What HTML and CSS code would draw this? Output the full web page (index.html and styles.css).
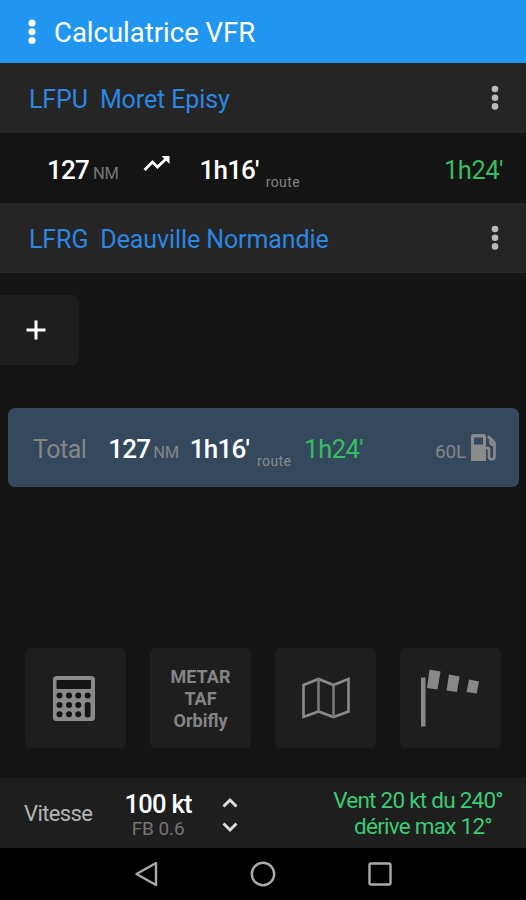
FILE: index.html
```html
<!DOCTYPE html>
<html lang="fr">

<head>
    <meta charset="UTF-8">
    <meta name="viewport" content="width=device-width, initial-scale=1.0">
    <title>Calculatrice VFR</title>
    <link rel="stylesheet" href="styles.css">
</head>

<body>
    <header class="topbar">
        <svg class="dots" width="8" height="26" viewBox="0 0 8 26">
            <circle cx="4" cy="4" r="3.5" />
            <circle cx="4" cy="12.7" r="3.5" />
            <circle cx="4" cy="21.4" r="3.5" />
        </svg>
        <h1>Calculatrice VFR</h1>
    </header>

    <main>
        <div class="airport">
            <span class="code">LFPU</span>
            <span class="name">Moret Episy</span>
            <svg class="dots" width="8" height="26" viewBox="0 0 8 26">
                <circle cx="4" cy="4" r="3.3" />
                <circle cx="4" cy="12.7" r="3.3" />
                <circle cx="4" cy="21.4" r="3.3" />
            </svg>
        </div>

        <div class="leg">
            <span class="value">127</span>
            <span class="unit">NM</span>
            <svg class="trend" width="28" height="18" viewBox="0 0 28 18">
                <path d="M1.500 15 L9.500 7 L14.500 12 L23.500 3.500" />
                <path class="head" d="M18.500 1 H26.500 V9 Z" />
            </svg>
            <span class="value">1h16'</span>
            <span class="route">route</span>
            <span class="wind-time">1h24'</span>
        </div>

        <div class="airport">
            <span class="code">LFRG</span>
            <span class="name">Deauville Normandie</span>
            <svg class="dots" width="8" height="26" viewBox="0 0 8 26">
                <circle cx="4" cy="4" r="3.3" />
                <circle cx="4" cy="12.7" r="3.3" />
                <circle cx="4" cy="21.4" r="3.3" />
            </svg>
        </div>

        <button class="add" aria-label="Ajouter">
            <svg width="20" height="20" viewBox="0 0 20 20">
                <path d="M10 0.500 V19.500 M0.500 10 H19.500" />
            </svg>
        </button>

        <div class="total">
            <span class="label">Total</span>
            <span class="value">127</span>
            <span class="unit">NM</span>
            <span class="value">1h16'</span>
            <span class="route">route</span>
            <span class="wind-time">1h24'</span>
            <span class="fuel">60L</span>
            <svg class="pump" width="25" height="27" viewBox="0 0 25 27">
                <path class="body" fill-rule="evenodd"
                    d="M0 27 V3 Q0 0 3 0 H12 Q15 0 15 3 V27 Z M3 3.500 V10.500 H12 V3.500 Z" />
                <path class="hose"
                    d="M15 14 H16 Q18 14 18 16 V22.500 Q18 25.300 20.700 25.300 Q23.500 25.300 23.500 22.500 V8.500 L17 2.200" />
                <path class="hose" d="M19.500 5 V8.500 Q19.500 10.800 23.500 11" />
            </svg>
        </div>
    </main>

    <nav class="tools">
        <button class="tool" aria-label="Calculatrice">
            <svg class="calc" width="42" height="45" viewBox="0 0 42 45">
                <rect class="case" x="0" y="0" width="42" height="45" rx="3.500" />
                <rect x="3.500" y="4" width="34.500" height="9" rx="1" />
                <circle cx="6.500" cy="19.500" r="3" />
                <circle cx="16" cy="19.500" r="3" />
                <circle cx="25.300" cy="19.500" r="3" />
                <circle cx="34.700" cy="19.500" r="3" />
                <circle cx="6.500" cy="29" r="3" />
                <circle cx="16" cy="29" r="3" />
                <circle cx="25.300" cy="29" r="3" />
                <circle cx="6.500" cy="38.300" r="3" />
                <circle cx="16" cy="38.300" r="3" />
                <circle cx="25.300" cy="38.300" r="3" />
                <rect x="31.800" y="26" width="5.800" height="15.500" rx="2.500" />
            </svg>
        </button>
        <button class="tool text">METAR<br>TAF<br>Orbifly</button>
        <button class="tool" aria-label="Carte">
            <svg class="map" width="48" height="42" viewBox="0 0 48 42">
                <path d="M1.500 8 L16.500 2 L31.500 8 L46.500 2 V34.500 L31.500 40 L16.500 34.500 L1.500 40 Z" />
                <path class="fold" d="M16.500 2 V34.500 M31.500 8 V40" />
            </svg>
        </button>
        <button class="tool" aria-label="Vent">
            <svg class="windsock" width="100" height="100" viewBox="0 0 100 100">
                <path d="M20 29.500 H24.500 V78.500 H20 Z" />
                <path d="M28.500 21.500 L39.500 23.500 L36.500 41.500 L26 40 Z" />
                <path d="M48 26.500 L58.500 28.500 L56 44 L45.500 42.500 Z" />
                <path d="M68 31.500 L78 33.500 L75.700 45.500 L65.500 44 Z" />
            </svg>
        </button>
    </nav>

    <footer class="settings">
        <span class="speed-label">Vitesse</span>
        <div class="speed">
            <strong>100 kt</strong>
            <span>FB 0.6</span>
        </div>
        <svg class="stepper" width="16" height="36" viewBox="0 0 16 36">
            <path d="M1.500 9.500 L8 3 L14.500 9.500" />
            <path d="M1.500 26.500 L8 33 L14.500 26.500" />
        </svg>
        <div class="wind">
            <span>Vent 20 kt du 240°</span>
            <span class="drift">dérive max 12°</span>
        </div>
    </footer>

    <div class="system-nav">
        <svg width="26" height="26" viewBox="0 0 26 26">
            <path d="M23 2 V24 L3.500 13 Z" />
        </svg>
        <svg width="26" height="26" viewBox="0 0 26 26">
            <circle cx="13" cy="13" r="11.200" />
        </svg>
        <svg width="26" height="26" viewBox="0 0 26 26">
            <rect x="2.500" y="2.500" width="21" height="21" rx="1.500" />
        </svg>
    </div>
</body>

</html>
```
FILE: styles.css
```css
* {
    box-sizing: border-box;
}

body {
    display: flex;
    flex-direction: column;
    height: 900px;
    margin: 0;
    background: #141414;
    color: #fff;
    font-family: Roboto, sans-serif;
    overflow: hidden;
}

svg {
    display: block;
    flex: none;
}

button {
    border: 0;
    padding: 0;
    font: inherit;
    color: inherit;
}

span,
strong {
    white-space: nowrap;
}

/* barre du haut */
.topbar {
    display: flex;
    align-items: center;
    height: 63px;
    padding-left: 28px;
    background: #2196f0;
}

.topbar h1 {
    margin: 3px 0 0 18px;
    font-size: 27.500px;
    line-height: 32px;
    font-weight: 400;
}

.dots {
    fill: #fff;
}

/* aérodromes */
.airport {
    display: flex;
    align-items: center;
    height: 70px;
    padding: 0 27px 0 29px;
    background: #252525;
    color: #2b87e3;
    font-size: 25px;
    letter-spacing: -0.1px;
}

.airport span {
    margin-top: 2px;
}

.airport .name {
    margin-left: 12px;
}

.airport .dots {
    margin-left: auto;
    fill: #b9b9b9;
}

/* branche */
.leg {
    display: flex;
    align-items: baseline;
    height: 70px;
    padding: 22px 23px 0 47px;
}

.value {
    font-size: 26px;
    line-height: 30px;
    font-weight: 500;
    letter-spacing: -0.8px;
}

.unit {
    margin-left: 4px;
    color: #777;
    font-size: 16.500px;
    letter-spacing: -0.3px;
}

.trend {
    align-self: flex-start;
    margin: 0 29px 0 24px;
    fill: none;
    stroke: #fff;
    stroke-width: 2.8;
}

.trend .head {
    fill: #fff;
    stroke: none;
}

.route {
    position: relative;
    top: 8px;
    margin-left: 7px;
    color: #808080;
    font-size: 14px;
    letter-spacing: 0.4px;
}

.wind-time {
    color: #34be5f;
    font-size: 25.500px;
    letter-spacing: -0.5px;
}

.leg .wind-time {
    margin: 0 0 1px auto;
}

.add {
    display: flex;
    align-items: center;
    width: 79px;
    height: 70px;
    margin-top: 22px;
    padding-left: 26px;
    border-radius: 0 7px 7px 0;
    background: #1e1e1e;
}

.add path {
    stroke: #fff;
    stroke-width: 3;
}

/* total */
.total {
    display: flex;
    align-items: baseline;
    height: 79px;
    margin: 43px 7px 0 8px;
    padding: 26px 23px 0 25px;
    border-radius: 7px;
    background: #34495e;
}

.total .label {
    margin-right: 22px;
    color: #858585;
    font-size: 25px;
    letter-spacing: -0.5px;
}

.total .unit {
    margin-left: 3px;
    margin-right: 11px;
    color: #858585;
}

.total .route {
    margin-left: 8px;
    margin-right: 13px;
    color: #8b8b8b;
}

.fuel {
    margin-left: auto;
    color: #858585;
    font-size: 19px;
    letter-spacing: -0.2px;
}

.pump {
    align-self: flex-start;
    margin-left: 5px;
}

.pump .body {
    fill: #8b8b8b;
}

.pump .hose {
    fill: none;
    stroke: #8b8b8b;
    stroke-width: 2.6;
}

/* outils */
.tools {
    display: flex;
    justify-content: space-between;
    margin: auto 25px 30px;
}

.tool {
    display: flex;
    align-items: center;
    justify-content: center;
    width: 101px;
    height: 100px;
    border-radius: 6px;
    background: #1e1e1e;
    color: #858585;
    font-size: 18px;
    line-height: 22px;
    font-weight: 700;
}

.tool.text {
    padding-top: 2px;
}

.tool svg {
    fill: #141414;
}

.tool .calc {
    margin-right: 4px;
}

.tool .case {
    fill: #8a8a8a;
}

.tool .map {
    fill: none;
    stroke: #8a8a8a;
    stroke-width: 2.6;
}

.map .fold {
    stroke: #777;
}

.tool .windsock {
    fill: #888;
}

/* réglages */
.settings {
    display: flex;
    align-items: center;
    height: 70px;
    padding: 0 23px 0 24px;
    background: #1e1e1e;
}

.speed-label {
    color: #b4b4b4;
    font-size: 22px;
    letter-spacing: -0.6px;
}

.speed {
    display: flex;
    flex-direction: column;
    align-items: center;
    margin-left: 32px;
    padding-top: 3px;
}

.speed strong {
    font-size: 25.500px;
    line-height: 28px;
    font-weight: 500;
    letter-spacing: -0.7px;
}

.speed span {
    color: #747474;
    font-size: 19px;
    line-height: 22px;
    letter-spacing: -0.1px;
}

.stepper {
    margin: 3px 0 0 30px;
    fill: none;
    stroke: #ddd;
    stroke-width: 3;
}

.wind {
    display: flex;
    flex-direction: column;
    align-items: center;
    margin-left: auto;
    color: #3acb74;
    font-size: 22.500px;
    line-height: 26px;
    letter-spacing: -0.75px;
}

.drift {
    padding-left: 10px;
}

/* navigation système */
.system-nav {
    display: flex;
    align-items: center;
    justify-content: center;
    gap: 91px;
    height: 52px;
    background: #000;
    fill: none;
    stroke: #aaa;
    stroke-width: 2.4;
    stroke-linejoin: round;
}
```
